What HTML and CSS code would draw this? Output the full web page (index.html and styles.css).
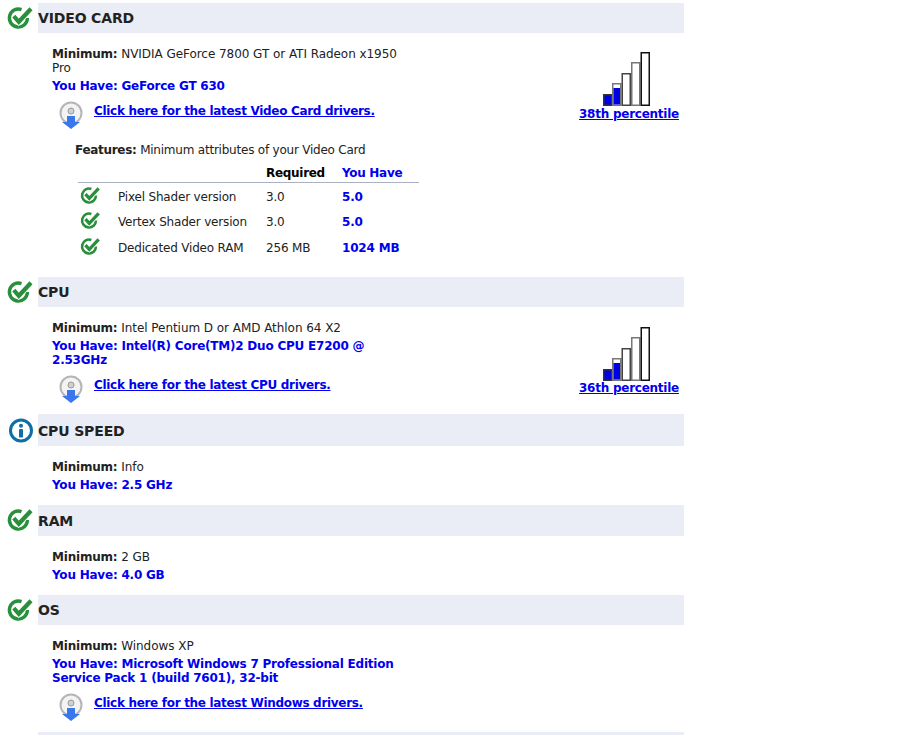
FILE: index.html
```html
<!DOCTYPE html>
<html lang="en">
<head>
<meta charset="utf-8">
<title>System requirements</title>
<link rel="stylesheet" href="styles.css">
</head>
<body>
<svg class="defs" width="0" height="0">
  <defs>
    <symbol id="check" viewBox="0 0 26 26" overflow="visible">
      <path d="M19.400 11A9 9 0 1 1 13.500 2.600" fill="none" stroke="#2a8f3c" stroke-width="3.400"/>
      <path d="M5.800 9.200l5 5.600L23 1.800" fill="none" stroke="#fff" stroke-width="6"/>
      <path d="M5.800 9.200l5 5.600L23 1.800" fill="none" stroke="#2a8f3c" stroke-width="4.200"/>
    </symbol>
    <symbol id="disc" viewBox="0 0 26 30">
      <circle cx="12" cy="12" r="10.500" fill="#f3f3f3" stroke="#b5b5b5" stroke-width="2"/>
      <circle cx="12" cy="10" r="3" fill="#d0d0d0" stroke="#999"/>
      <path d="M8 15h8v6h5l-9 7-9-7h5z" fill="#3a76ee"/>
    </symbol>
    <symbol id="bars38" viewBox="0 0 47 54">
      <rect x=".75" y="42.750" width="8" height="10.500" fill="#0000e6" stroke="#333" stroke-width="1.500"/>
      <rect x="9.750" y="31.750" width="8" height="21.500" fill="#fff" stroke="#777" stroke-width="1.500"/>
      <rect x="10.500" y="36" width="6.500" height="16.500" fill="#0000e6"/>
      <rect x="19.250" y="21.750" width="8" height="31.500" fill="#fff" stroke="#444" stroke-width="1.500"/>
      <rect x="28.750" y="10.750" width="8" height="42.500" fill="#fff" stroke="#777" stroke-width="1.500"/>
      <rect x="38.250" y=".75" width="8" height="52.500" fill="#fff" stroke="#111" stroke-width="1.500"/>
    </symbol>
  </defs>
</svg>

<section class="sec sec-video">
  <header class="head">
    <svg class="status"><use href="#check"/></svg>
    <h2 class="title">VIDEO CARD</h2>
  </header>
  <div class="body">
    <div class="info">
      <p class="min"><b>Minimum:</b> NVIDIA GeForce 7800 GT or ATI Radeon x1950 Pro</p>
      <p class="have">You Have: GeForce GT 630</p>
      <p class="driver"><svg class="disc"><use href="#disc"/></svg><a href="#">Click here for the latest Video Card drivers.</a></p>
    </div>
    <div class="pct"><svg class="bars"><use href="#bars38"/></svg><a href="#">38th percentile</a></div>
  </div>
  <div class="features">
    <p class="feat-title"><b>Features:</b> Minimum attributes of your Video Card</p>
    <table class="feat">
      <tr class="feat-head"><th class="c-icon"></th><th class="c-name"></th><th class="c-req">Required</th><th class="c-have">You Have</th></tr>
      <tr><td class="c-icon"><svg class="mini"><use href="#check"/></svg></td><td class="c-name">Pixel Shader version</td><td class="c-req">3.0</td><td class="c-have">5.0</td></tr>
      <tr><td class="c-icon"><svg class="mini"><use href="#check"/></svg></td><td class="c-name">Vertex Shader version</td><td class="c-req">3.0</td><td class="c-have">5.0</td></tr>
      <tr><td class="c-icon"><svg class="mini"><use href="#check"/></svg></td><td class="c-name">Dedicated Video RAM</td><td class="c-req">256 MB</td><td class="c-have">1024 MB</td></tr>
    </table>
  </div>
</section>

<section class="sec sec-cpu">
  <header class="head">
    <svg class="status"><use href="#check"/></svg>
    <h2 class="title">CPU</h2>
  </header>
  <div class="body">
    <div class="info">
      <p class="min"><b>Minimum:</b> Intel Pentium D or AMD Athlon 64 X2</p>
      <p class="have">You Have: Intel(R) Core(TM)2 Duo CPU E7200 @ 2.53GHz</p>
      <p class="driver"><svg class="disc"><use href="#disc"/></svg><a href="#">Click here for the latest CPU drivers.</a></p>
    </div>
    <div class="pct"><svg class="bars"><use href="#bars38"/></svg><a href="#">36th percentile</a></div>
  </div>
</section>

<section class="sec sec-speed">
  <header class="head head-tall">
    <svg class="status" viewBox="0 0 26 26"><circle cx="13" cy="12.500" r="10.500" fill="#fff" stroke="#0f6ea8" stroke-width="3"/><circle cx="13" cy="7.800" r="2" fill="#0f6ea8"/><rect x="11" y="11" width="4" height="8.500" rx=".8" fill="#0f6ea8"/></svg>
    <h2 class="title">CPU SPEED</h2>
  </header>
  <div class="body">
    <div class="info">
      <p class="min"><b>Minimum:</b> Info</p>
      <p class="have">You Have: 2.5 GHz</p>
    </div>
  </div>
</section>

<section class="sec sec-ram">
  <header class="head head-ram">
    <svg class="status"><use href="#check"/></svg>
    <h2 class="title">RAM</h2>
  </header>
  <div class="body">
    <div class="info">
      <p class="min"><b>Minimum:</b> 2 GB</p>
      <p class="have">You Have: 4.0 GB</p>
    </div>
  </div>
</section>

<section class="sec sec-os">
  <header class="head">
    <svg class="status"><use href="#check"/></svg>
    <h2 class="title">OS</h2>
  </header>
  <div class="body">
    <div class="info">
      <p class="min"><b>Minimum:</b> Windows XP</p>
      <p class="have">You Have: Microsoft Windows 7 Professional Edition Service Pack 1 (build 7601), 32-bit</p>
      <p class="driver"><svg class="disc"><use href="#disc"/></svg><a href="#">Click here for the latest Windows drivers.</a></p>
    </div>
  </div>
</section>

<div class="next-bar"></div>
</body>
</html>
```
FILE: styles.css
```css
html, body { margin: 0; padding: 0; }
html { overflow: hidden; height: 735px; }
body {
  padding-top: 3px;
  width: 900px;
  height: 732px;
  overflow: hidden;
  background: #fff;
  color: #222;
  font-family: "DejaVu Sans", Verdana, sans-serif;
  font-size: 12px;
  line-height: 14px;
  letter-spacing: -0.05px;
}
b { letter-spacing: -0.2px; }
.defs { display: block; height: 0; }
p { margin: 0; }
a { color: #0000ee; font-weight: bold; letter-spacing: -0.31px; }
.head {
  display: flex;
  align-items: center;
  height: 30px;
  position: relative;
  margin-left: 38px;
  width: 646px;
  background: #eaedf5;
}
.head-tall { height: 32px; padding-top: 1px; box-sizing: border-box; }
.head-ram { height: 31px; }
.status {
  position: absolute;
  left: -30px;
  top: 4px;
  width: 26px;
  height: 26px;
  overflow: visible;
}
.title {
  margin: 0;
  font-size: 14px;
  line-height: 16px;
  font-weight: bold;
  letter-spacing: -0.15px;
  color: #222;
}
.body {
  display: flex;
  justify-content: space-between;
  margin-left: 52px;
  width: 627px;
  padding-top: 14px;
}
.info { width: 350px; }
.have {
  margin-top: 4px;
  color: #0000ee;
  font-weight: bold;
  letter-spacing: -0.22px;
}
.driver {
  display: flex;
  align-items: flex-start;
  margin-top: 8px;
  margin-left: 7px;
  height: 30px;
}
.driver a { margin-left: 9px; margin-top: 3px; }
.disc { width: 26px; height: 30px; }
.pct {
  display: flex;
  flex-direction: column;
  align-items: center;
  width: 100px;
  margin-top: 5px;
  white-space: nowrap;
}
.pct a { letter-spacing: -0.25px; }
.bars { width: 47px; height: 54px; margin-right: 6px; margin-bottom: 1px; }
.sec-cpu .pct { margin-top: 6px; }
.sec-cpu .bars { margin-bottom: 0; }
.features { margin-left: 75px; margin-top: 12px; }
.feat-title { letter-spacing: -0.22px; }
.feat-title b { letter-spacing: -0.3px; }
.feat { border-collapse: collapse; margin-top: 9px; margin-left: 3px; width: 341px; }
.feat th, .feat td { text-align: left; letter-spacing: -0.18px; }
.feat td { padding: 2px 0 0; height: 23.5px; }
.feat .feat-head th { padding: 0; height: 16px; vertical-align: top; border-bottom: 1px solid #a9b2c0; font-weight: bold; color: #000; letter-spacing: -0.3px; }
.c-icon { width: 40px; }
.c-name { width: 148px; }
.c-req { width: 76px; }
.feat .c-have { color: #0000ee; font-weight: bold; }
.feat .feat-head .c-have { color: #0000ee; }
.mini { width: 20px; height: 20px; display: block; margin-left: 3px; overflow: visible; }
.sec-video { height: 274px; }
.sec-cpu { height: 137px; }
.sec-speed { height: 91px; }
.sec-ram { height: 90px; }
.sec-os { height: 137px; }
.next-bar { margin-left: 38px; width: 646px; height: 10px; background: #eaedf5; }
```
